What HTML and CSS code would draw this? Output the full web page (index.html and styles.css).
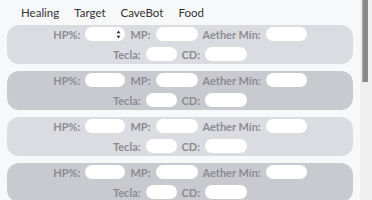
FILE: index.html
```html
<!DOCTYPE html>
<html lang="pt">
<head>
    <meta charset="UTF-8">
    <meta name="viewport" content="width=device-width, initial-scale=1.0">
    <title>Healing</title>
    <link rel="stylesheet" href="styles.css">
</head>
<body>
    <div class="page">
        <div class="tabs">
            <span class="tab">Healing</span>
            <span class="tab">Target</span>
            <span class="tab">CaveBot</span>
            <span class="tab">Food</span>
        </div>

        <div class="card light">
            <div class="row">
                <span class="label">HP%:</span>
                <div class="field hp spin-field">
                    <svg class="spin" width="5" height="9" viewBox="0 0 5 9"><path d="M2.5 0.5 L4.5 3.2 L0.5 3.2 Z M2.5 8.5 L4.5 5.8 L0.5 5.8 Z" fill="#333"/></svg>
                </div>
                <span class="label">MP:</span>
                <div class="field mp"></div>
                <span class="label">Aether Mín:</span>
                <div class="field aether"></div>
            </div>
            <div class="row">
                <span class="label">Tecla:</span>
                <div class="field tecla"></div>
                <span class="label">CD:</span>
                <div class="field cd"></div>
            </div>
        </div>

        <div class="card dark">
            <div class="row">
                <span class="label">HP%:</span>
                <div class="field hp"></div>
                <span class="label">MP:</span>
                <div class="field mp"></div>
                <span class="label">Aether Mín:</span>
                <div class="field aether"></div>
            </div>
            <div class="row">
                <span class="label">Tecla:</span>
                <div class="field tecla"></div>
                <span class="label">CD:</span>
                <div class="field cd"></div>
            </div>
        </div>

        <div class="card light">
            <div class="row">
                <span class="label">HP%:</span>
                <div class="field hp"></div>
                <span class="label">MP:</span>
                <div class="field mp"></div>
                <span class="label">Aether Mín:</span>
                <div class="field aether"></div>
            </div>
            <div class="row">
                <span class="label">Tecla:</span>
                <div class="field tecla"></div>
                <span class="label">CD:</span>
                <div class="field cd"></div>
            </div>
        </div>

        <div class="card dark">
            <div class="row">
                <span class="label">HP%:</span>
                <div class="field hp"></div>
                <span class="label">MP:</span>
                <div class="field mp"></div>
                <span class="label">Aether Mín:</span>
                <div class="field aether"></div>
            </div>
            <div class="row">
                <span class="label">Tecla:</span>
                <div class="field tecla"></div>
                <span class="label">CD:</span>
                <div class="field cd"></div>
            </div>
        </div>
    </div>

    <div class="scrollbar">
        <div class="thumb"></div>
    </div>
</body>
</html>
```

FILE: styles.css
```css
body {
    margin: 0;
    height: 200px;
    overflow: hidden;
    display: flex;
    background-color: #f7f8fa;
    font-family: Lato, "Open Sans", sans-serif;
}

.page {
    flex: 1;
    padding: 0 7px;
}

.tabs {
    display: flex;
    gap: 15px;
    padding: 6px 0 0 14px;
    height: 19px;
    font-size: 11.5px;
    line-height: 14px;
    color: #333;
}

.card {
    border-radius: 12px;
    padding: 2px 0 3px;
    margin-bottom: 7px;
    display: flex;
    flex-direction: column;
    gap: 6px;
}

.card.light {
    background-color: #dbdce1;
}

.card.dark {
    background-color: #c9cacf;
}

.row {
    display: flex;
    justify-content: center;
    align-items: center;
    gap: 5px;
    height: 14px;
}

.label {
    font-size: 11px;
    font-weight: bold;
    color: #8b8c92;
}

.field {
    height: 14px;
    border-radius: 7px;
    background-color: #fff;
}

.field.hp { width: 40px; }
.field.mp { width: 42px; }
.field.aether { width: 41px; }
.field.tecla { width: 31px; }
.field.cd { width: 42px; }

.spin-field {
    display: flex;
    justify-content: flex-end;
    align-items: center;
}

.spin {
    margin-right: 4px;
}

.scrollbar {
    width: 12px;
    background-color: #efefef;
}

.thumb {
    margin-left: 2px;
    width: 5px;
    height: 82px;
    background-color: #8a8a8a;
    border-left: 1px solid #a8a8a8;
}
```
